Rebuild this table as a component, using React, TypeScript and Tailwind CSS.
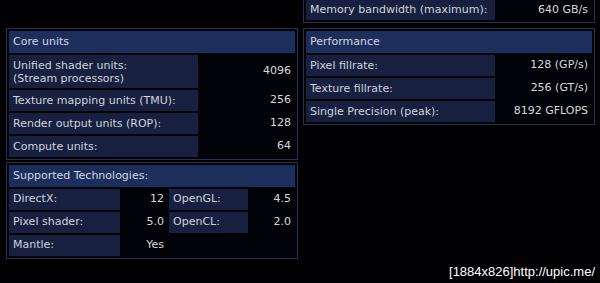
const font = { fontFamily: '"DejaVu Sans", Verdana, sans-serif' };

type Row = { label: React.ReactNode; value: string; tall?: boolean };

function Panel({
  title,
  children,
  className = "",
}: {
  title?: string;
  children: React.ReactNode;
  className?: string;
}) {
  return (
    <div
      className={`flex flex-col gap-[2px] border border-[#27314b] bg-[#020308] p-[2px] ${className}`}
    >
      {title && (
        <div className="flex h-[22px] items-center bg-[#1c2e5c] pl-[4px] text-[#d3d7e0]">
          {title}
        </div>
      )}
      {children}
    </div>
  );
}

function SpecRow({ label, value, tall }: Row) {
  return (
    <div className={`flex ${tall ? "h-[33px]" : "h-[21px]"}`}>
      <div className="flex w-[189px] items-center bg-[#17213f] pl-[4px] leading-[13px] text-[#cfd3dc]">
        {label}
      </div>
      <div className="flex flex-1 items-center justify-end pr-[4px] text-[#d6d8dc]">
        {value}
      </div>
    </div>
  );
}

function TechRow({
  a,
  av,
  b,
  bv,
}: {
  a: string;
  av: string;
  b?: string;
  bv?: string;
}) {
  return (
    <div className="flex h-[21px]">
      <div className="flex w-[111px] items-center bg-[#17213f] pl-[4px] text-[#cfd3dc]">{a}</div>
      <div className="flex w-[47px] items-center justify-end pr-[3px] text-[#d6d8dc]">{av}</div>
      {b && (
        <>
          <div className="ml-[2px] flex w-[79px] items-center bg-[#17213f] pl-[4px] text-[#cfd3dc]">
            {b}
          </div>
          <div className="flex flex-1 items-center justify-end pr-[4px] text-[#d6d8dc]">{bv}</div>
        </>
      )}
    </div>
  );
}

export default function App() {
  return (
    <div
      className="relative h-[283px] w-[600px] overflow-hidden bg-[#010103] text-[11px]"
      style={font}
    >
      <div className="flex gap-[5px] pl-[6px]">
        {/* left column */}
        <div className="mt-[28px] flex w-[292px] flex-col gap-[2px]">
          <Panel title="Core units">
            <SpecRow
              tall
              label={
                <span>
                  Unified shader units:
                  <br />
                  (Stream processors)
                </span>
              }
              value="4096"
            />
            <SpecRow label="Texture mapping units (TMU):" value="256" />
            <SpecRow label="Render output units (ROP):" value="128" />
            <SpecRow label="Compute units:" value="64" />
          </Panel>
          <Panel title="Supported Technologies:">
            <TechRow a="DirectX:" av="12" b="OpenGL:" bv="4.5" />
            <TechRow a="Pixel shader:" av="5.0" b="OpenCL:" bv="2.0" />
            <TechRow a="Mantle:" av="Yes" />
          </Panel>
        </div>

        {/* right column */}
        <div className="flex w-[292px] flex-col gap-[5px]">
          <div className="flex flex-col border-x border-b border-[#27314b] bg-[#020308] px-[2px] pb-[2px]">
            <div className="flex h-[20px]">
              <div className="flex w-[189px] items-center bg-[#17213f] pl-[4px] text-[#cfd3dc]">
                Memory bandwidth (maximum):
              </div>
              <div className="flex flex-1 items-center justify-end pr-[4px] text-[#d6d8dc]">
                640 GB/s
              </div>
            </div>
          </div>
          <Panel title="Performance">
            <SpecRow label="Pixel fillrate:" value="128 (GP/s)" />
            <SpecRow label="Texture fillrate:" value="256 (GT/s)" />
            <SpecRow label="Single Precision (peak):" value="8192 GFLOPS" />
          </Panel>
        </div>
      </div>

      <div
        className="absolute bottom-[3px] right-[5px] text-[13px] leading-[16px] text-white"
        style={{ fontFamily: '"Liberation Sans", Arial, sans-serif' }}
      >
        [1884x826]http://upic.me/
      </div>
    </div>
  );
}
